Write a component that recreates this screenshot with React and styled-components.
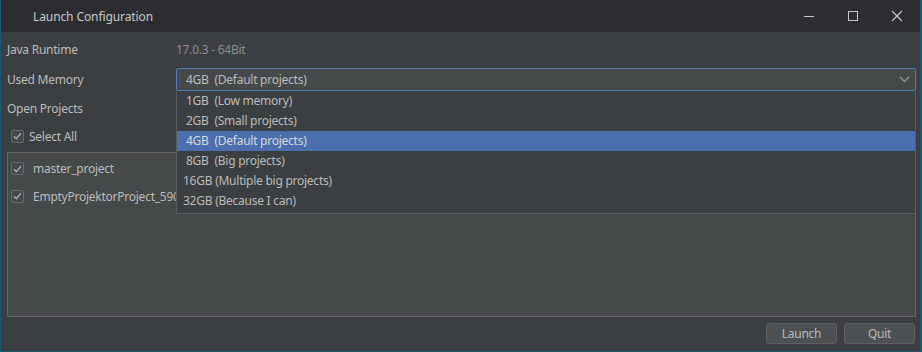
import React, { useState } from "react";
import styled, { createGlobalStyle } from "styled-components";

const GlobalStyle = createGlobalStyle`
  html, body {
    margin: 0;
    padding: 0;
    background: #1c4a60;
  }
  body {
    font-family: "Noto Sans", "Open Sans", sans-serif;
    font-size: 12px;
    letter-spacing: -0.25px;
    color: #bbbbbb;
  }
`;

const Window = styled.div`
  width: 922px;
  height: 352px;
  box-sizing: border-box;
  display: flex;
  flex-direction: column;
  border-left: 1px solid #1d5873;
  border-right: 2px solid #1d5873;
  border-bottom: 1px solid #1d5873;
  background: #3c3f41;
`;

const TitleBar = styled.div`
  height: 32px;
  flex: none;
  display: flex;
  align-items: center;
  background: #2b2d30;
  padding-left: 32px;
  padding-right: 1px;
`;

const Title = styled.div`
  flex: 1;
  font-size: 12px;
  letter-spacing: -0.1px;
  color: #c8c8c8;
`;

const WinButton = styled.div`
  width: 44px;
  height: 32px;
  display: flex;
  align-items: center;
  justify-content: center;
  color: #c8c8c8;
`;

const Body = styled.div`
  flex: 1;
  display: flex;
  flex-direction: column;
  padding: 2px 4px 7px 6px;
  position: relative;
`;

const Row = styled.div`
  height: ${({ h }) => h}px;
  display: grid;
  grid-template-columns: 169px 1fr;
  align-items: center;
`;

const Label = styled.div`
  color: #bbbbbb;
`;

const Value = styled.div`
  color: #8c8c8c;
`;

const Combo = styled.div`
  position: relative;
  height: 23px;
  box-sizing: border-box;
  border: 1px solid #4a7fb5;
  border-radius: 2px;
  background: #45494a;
  display: flex;
  align-items: center;
  padding-left: 9px;
  color: #bbbbbb;
`;

const Chevron = styled.svg`
  position: absolute;
  right: 5px;
  top: 6px;
`;

const Popup = styled.div`
  position: absolute;
  left: -1px;
  right: -1px;
  top: 22px;
  background: #3c3f41;
  border: 1px solid #5b5e60;
  border-top: none;
  z-index: 2;
  padding: 0 0 2px;
`;

const Option = styled.div`
  height: 20px;
  display: flex;
  align-items: center;
  padding-left: ${({ wide }) => (wide ? 6 : 9)}px;
  background: ${({ selected }) => (selected ? "#4b6eaf" : "transparent")};
  color: ${({ selected }) => (selected ? "#d8d8d8" : "#bbbbbb")};
`;

const CheckRow = styled.div`
  height: ${({ h }) => h}px;
  display: flex;
  align-items: center;
  gap: ${({ gap }) => gap}px;
  padding-left: ${({ indent }) => indent}px;
`;

const Box = styled.div`
  width: 13px;
  height: 13px;
  box-sizing: border-box;
  border: 1px solid #6b6b6b;
  border-radius: 2px;
  background: #43494a;
  display: flex;
  align-items: center;
  justify-content: center;
`;

const ListPanel = styled.div`
  flex: 1;
  margin-top: 2px;
  border: 1px solid #646464;
  background: #45494a;
  padding-top: 2px;
`;

const Footer = styled.div`
  display: flex;
  justify-content: flex-end;
  gap: 7px;
  padding-top: 6px;
  padding-right: 1px;
`;

const Button = styled.div`
  width: 71px;
  height: 21px;
  box-sizing: border-box;
  border: 1px solid #5e6060;
  border-radius: 3px;
  background: #4c5052;
  display: flex;
  align-items: center;
  justify-content: center;
  color: #bbbbbb;
`;

const Check = () => (
  <Box>
    <svg width="9" height="8" viewBox="0 0 9 8">
      <path d="M1 4.2 L3.4 6.6 L8 1.2" fill="none" stroke="#a8a8a8" strokeWidth="1.4" />
    </svg>
  </Box>
);

const options = [
  { text: "1GB\u00a0\u00a0(Low memory)" },
  { text: "2GB\u00a0\u00a0(Small projects)" },
  { text: "4GB\u00a0\u00a0(Default projects)", selected: true },
  { text: "8GB\u00a0\u00a0(Big projects)" },
  { text: "16GB (Multiple big projects)", wide: true },
  { text: "32GB (Because I can)", wide: true },
];

export default function App() {
  const [open] = useState(true);
  return (
    <>
      <GlobalStyle />
      <Window>
        <TitleBar>
          <Title>Launch Configuration</Title>
          <WinButton>
            <svg width="12" height="12" viewBox="0 0 12 12">
              <path d="M1 6.5 H11" stroke="#c8c8c8" strokeWidth="1" />
            </svg>
          </WinButton>
          <WinButton>
            <svg width="12" height="12" viewBox="0 0 12 12">
              <rect x="1.5" y="1.5" width="9" height="9" fill="none" stroke="#c8c8c8" />
            </svg>
          </WinButton>
          <WinButton>
            <svg width="12" height="12" viewBox="0 0 12 12">
              <path d="M1 1 L11 11 M11 1 L1 11" stroke="#c8c8c8" strokeWidth="1.1" />
            </svg>
          </WinButton>
        </TitleBar>
        <Body>
          <Row h={30}>
            <Label>Java Runtime</Label>
            <Value>17.0.3 - 64Bit</Value>
          </Row>
          <Row h={30}>
            <Label>Used Memory</Label>
            <Combo>
              4GB&nbsp;&nbsp;(Default projects)
              <Chevron width="11" height="8" viewBox="0 0 11 8">
                <path d="M1 2 L5.5 6.5 L10 2" fill="none" stroke="#9a9a9a" strokeWidth="1.2" />
              </Chevron>
              {open && (
                <Popup>
                  {options.map((o) => (
                    <Option key={o.text} selected={o.selected} wide={o.wide}>
                      {o.text}
                    </Option>
                  ))}
                </Popup>
              )}
            </Combo>
          </Row>
          <Row h={28}>
            <Label>Open Projects</Label>
          </Row>
          <CheckRow h={28} gap={5} indent={4}>
            <Check />
            Select All
          </CheckRow>
          <ListPanel>
            <CheckRow h={27} gap={9} indent={3}>
              <Check />
              master_project
            </CheckRow>
            <CheckRow h={28} gap={9} indent={3}>
              <Check />
              EmptyProjektorProject_590
            </CheckRow>
          </ListPanel>
          <Footer>
            <Button>Launch</Button>
            <Button>Quit</Button>
          </Footer>
        </Body>
      </Window>
    </>
  );
}
